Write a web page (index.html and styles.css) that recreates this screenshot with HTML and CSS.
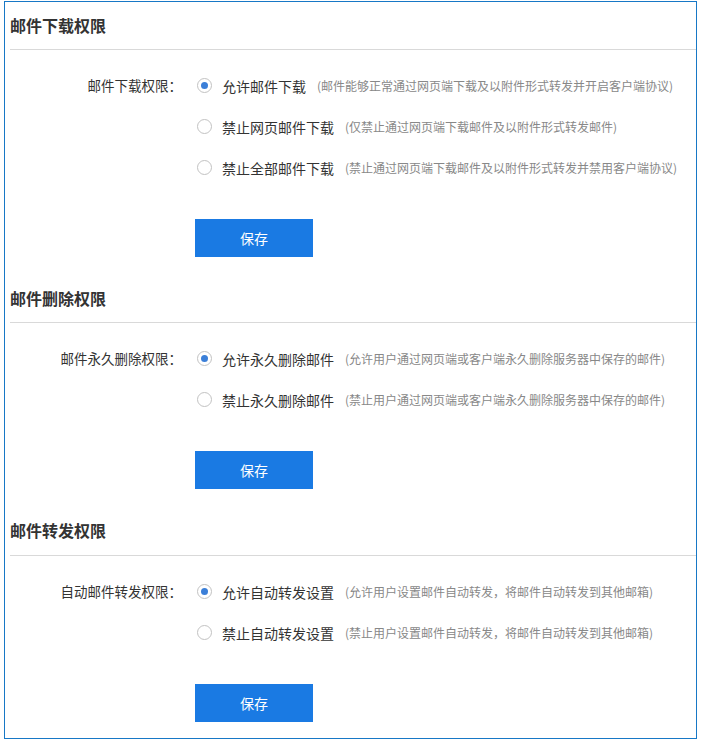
FILE: index.html
```html
<!DOCTYPE html>
<html lang="zh-CN">
<head>
<meta charset="utf-8">
<title>邮件权限</title>
<link rel="stylesheet" href="styles.css">
</head>
<body>
<div class="panel">
  <section class="sec">
    <h2 class="sec-title">邮件下载权限</h2>
    <div class="field">
      <div class="label">邮件下载权限：</div>
      <div class="opts">
        <label class="opt"><span class="radio checked"></span><span class="opt-text">允许邮件下载</span><span class="desc">(邮件能够正常通过网页端下载及以附件形式转发并开启客户端协议)</span></label>
        <label class="opt"><span class="radio"></span><span class="opt-text">禁止网页邮件下载</span><span class="desc">(仅禁止通过网页端下载邮件及以附件形式转发邮件)</span></label>
        <label class="opt"><span class="radio"></span><span class="opt-text">禁止全部邮件下载</span><span class="desc">(禁止通过网页端下载邮件及以附件形式转发并禁用客户端协议)</span></label>
      </div>
    </div>
    <div class="actions"><button class="btn">保存</button></div>
  </section>
  <section class="sec">
    <h2 class="sec-title">邮件删除权限</h2>
    <div class="field">
      <div class="label">邮件永久删除权限：</div>
      <div class="opts">
        <label class="opt"><span class="radio checked"></span><span class="opt-text">允许永久删除邮件</span><span class="desc">(允许用户通过网页端或客户端永久删除服务器中保存的邮件)</span></label>
        <label class="opt"><span class="radio"></span><span class="opt-text">禁止永久删除邮件</span><span class="desc">(禁止用户通过网页端或客户端永久删除服务器中保存的邮件)</span></label>
      </div>
    </div>
    <div class="actions"><button class="btn">保存</button></div>
  </section>
  <section class="sec last">
    <h2 class="sec-title">邮件转发权限</h2>
    <div class="field">
      <div class="label">自动邮件转发权限：</div>
      <div class="opts">
        <label class="opt"><span class="radio checked"></span><span class="opt-text">允许自动转发设置</span><span class="desc">(允许用户设置邮件自动转发，将邮件自动转发到其他邮箱)</span></label>
        <label class="opt"><span class="radio"></span><span class="opt-text">禁止自动转发设置</span><span class="desc">(禁止用户设置邮件自动转发，将邮件自动转发到其他邮箱)</span></label>
      </div>
    </div>
    <div class="actions"><button class="btn">保存</button></div>
  </section>
</div>
</body>
</html>
```

FILE: styles.css
```css
* { box-sizing: border-box; }
html, body { margin: 0; padding: 0; background: #fff; }
body {
  font-family: "Microsoft YaHei", "Noto Sans CJK SC", "Noto Sans", sans-serif;
  color: #333;
}
.panel {
  margin: 1px 0 0 4px;
  width: 693px;
  height: 738px;
  border: 1px solid #1778c6;
}
.sec { padding-bottom: 18px; }
.sec.last { padding-bottom: 0; }
.sec-title {
  margin: 0 0 0 5px;
  height: 48px;
  line-height: 47px;
  font-size: 16px;
  font-weight: bold;
  color: #333;
  border-bottom: 1px solid #d9d9d9;
}
.sec.last .sec-title { height: 49px; }
.field {
  display: flex;
  padding-top: 15px;
}
.label {
  width: 177px;
  text-align: right;
  font-size: 13.5px;
  line-height: 41px;
  color: #333;
}
.opts {
  display: flex;
  flex-direction: column;
  margin-left: 15px;
}
.opt {
  display: flex;
  align-items: center;
  height: 41px;
  white-space: nowrap;
}
.radio {
  width: 15px;
  height: 15px;
  border: 1px solid #c2c2c2;
  border-radius: 50%;
  background: #fff;
  display: flex;
  align-items: center;
  justify-content: center;
  flex: none;
}
.radio.checked::after {
  content: "";
  width: 7px;
  height: 7px;
  border-radius: 50%;
  background: #3b7fd8;
}
.opt-text {
  margin-left: 10px;
  font-size: 14px;
  color: #333;
}
.desc {
  margin-left: 11px;
  font-size: 12px;
  color: #888;
}
.actions {
  padding-left: 190px;
  margin-top: 31px;
}
.btn {
  display: block;
  width: 118px;
  height: 38px;
  border: 0;
  background: #1a7ae3;
  color: #fff;
  font-family: inherit;
  font-size: 14px;
  padding: 0;
}
```
